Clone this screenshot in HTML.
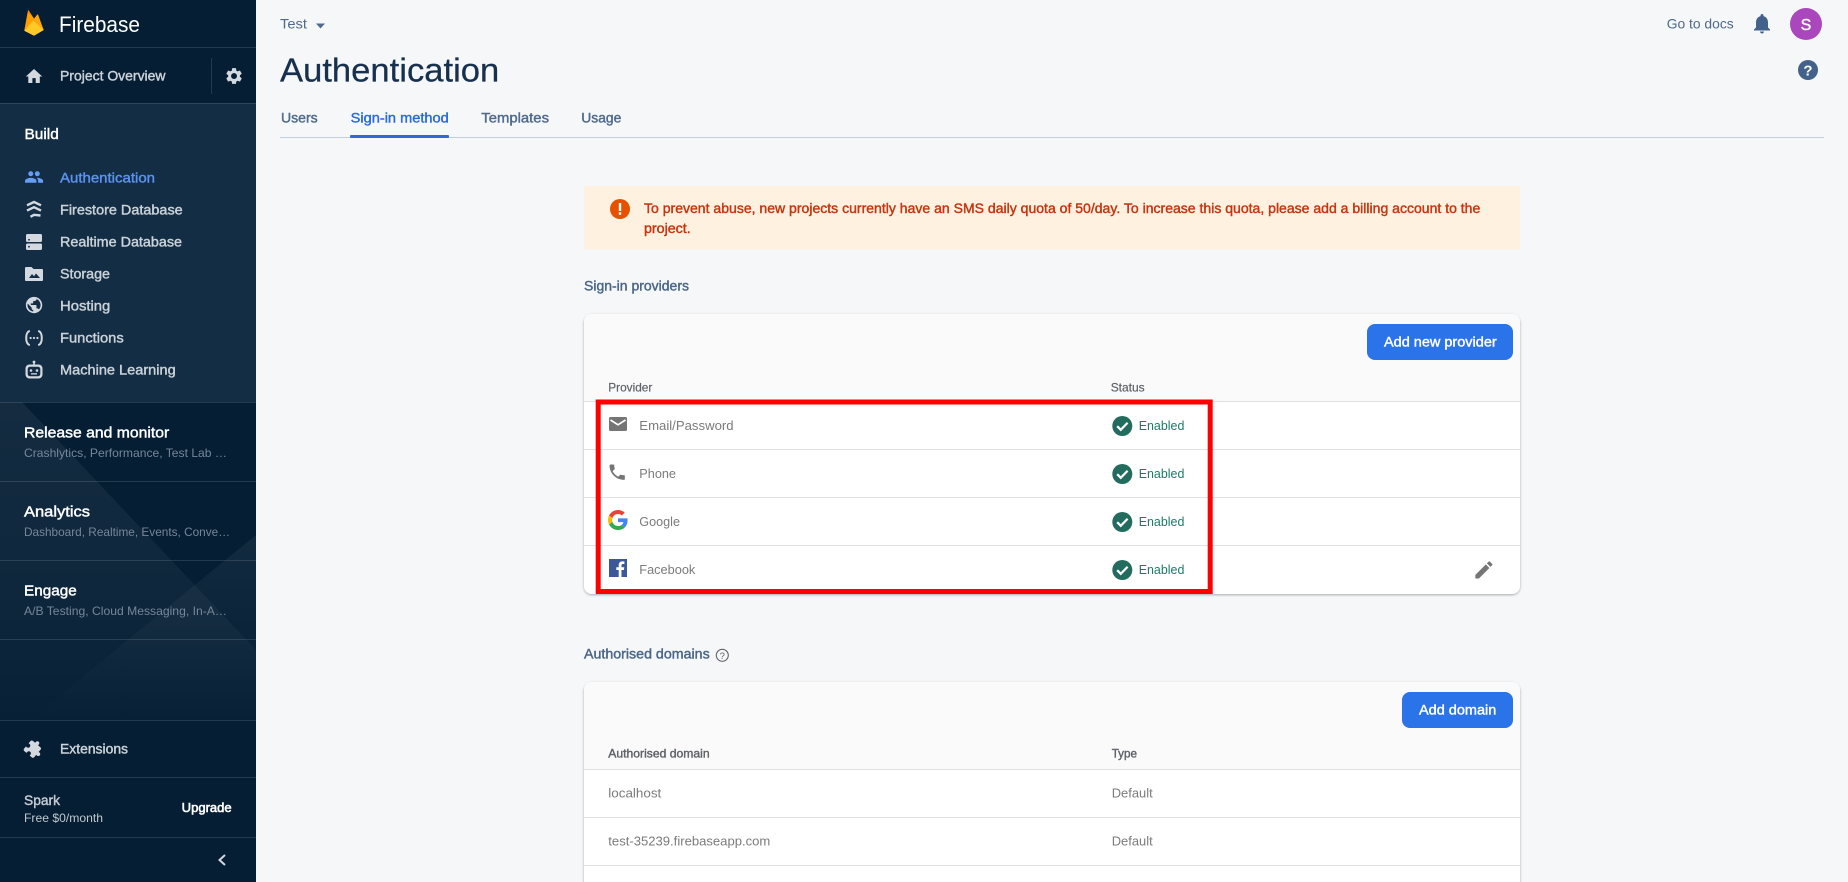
<!DOCTYPE html>
<html lang="en">
<head>
<meta charset="utf-8">
<title>Authentication - Firebase</title>
<style>
html,body{margin:0;padding:0;width:1848px;height:882px;overflow:hidden;background:#f6f7f9}
svg{display:block}
text{font-family:"Liberation Sans",Arial,sans-serif;white-space:pre}
.m{stroke-width:.42px;paint-order:stroke}
.nav{font-size:14px;fill:#cbd2d8;stroke:#cbd2d8}
.ttl{font-size:14.5px;fill:#fff;stroke:#fff}
.sub{font-size:12px;fill:#76869a}
.tab{font-size:14px;fill:#4f6a8a;stroke:#4f6a8a}
.ban{font-size:14px;fill:#c5350f;stroke:#c5350f}
.hd{font-size:14px;fill:#4a6585;stroke:#4a6585}
.th{font-size:12px;fill:#5f6368;stroke:#5f6368}
.td{font-size:13px;fill:#7b7b7b}
.ok{font-size:13px;fill:#1f7a6c}
.btn{font-size:14px;fill:#fff;stroke:#fff}
.ic{fill:#d3d9de}
</style>
</head>
<body>
<svg xmlns="http://www.w3.org/2000/svg" width="1848" height="882" viewBox="0 0 1848 882">
<defs>
<linearGradient id="g1" x1="0" y1="400" x2="0" y2="720" gradientUnits="userSpaceOnUse">
<stop offset="0" stop-color="#fff" stop-opacity=".06"/><stop offset=".6" stop-color="#fff" stop-opacity=".04"/><stop offset="1" stop-color="#fff" stop-opacity=".01"/>
</linearGradient>
<linearGradient id="g2" x1="0" y1="535" x2="0" y2="720" gradientUnits="userSpaceOnUse">
<stop offset="0" stop-color="#fff" stop-opacity=".055"/><stop offset="1" stop-color="#fff" stop-opacity="0"/>
</linearGradient>
<filter id="sh" x="-2%" y="-2%" width="104%" height="106%"><feDropShadow dx="0" dy="1" stdDeviation="1.4" flood-color="#000" flood-opacity=".32"/></filter>
</defs>

<!-- main background -->
<rect width="1848" height="882" fill="#f6f7f9"/>

<!-- sidebar -->
<rect width="256" height="882" fill="#051e34"/>
<rect y="103" width="256" height="299" fill="#132d45"/>
<polygon points="0,402 22,402 256,650 256,720 0,720" fill="url(#g1)"/>
<polygon points="256,535 30,720 256,720" fill="url(#g2)"/>
<g stroke="#fff" stroke-opacity=".12" stroke-width="1">
<line x1="0" y1="47.5" x2="256" y2="47.5"/>
<line x1="0" y1="103.5" x2="256" y2="103.5"/>
<line x1="0" y1="402.5" x2="256" y2="402.5"/>
<line x1="0" y1="481.5" x2="256" y2="481.5"/>
<line x1="0" y1="560.5" x2="256" y2="560.5"/>
<line x1="0" y1="639.5" x2="256" y2="639.5"/>
<line x1="0" y1="720.5" x2="256" y2="720.5"/>
<line x1="0" y1="777.5" x2="256" y2="777.5"/>
<line x1="0" y1="837.5" x2="256" y2="837.5"/>
<line x1="211.5" y1="58" x2="211.5" y2="94"/>
</g>

<!-- logo -->
<path d="M24.3 30.7L37.2 14.6Q37.7 14 38.1 14.7L43.7 30L34 35.6Q33.9 35.7 33.8 35.6Z" fill="#ffa712"/>
<path d="M24.3 30.7L27.9 10.6Q28.2 9.5 28.8 10.5L34.3 19Z" fill="#f57c00"/>
<path d="M24.3 30.7L28 11.5L34.3 19L30 24Z" fill="#ffa000"/>
<path d="M24.3 30.7L43.7 30L34.8 35.3Q34 35.8 33.2 35.3Z M24.3 30.7L33 20.5L43.7 30Z" fill="#ffca28"/>
<text x="59" y="32" font-size="22" fill="#fff" lengthAdjust="spacingAndGlyphs" textLength="81">Firebase</text>

<!-- project overview -->
<g transform="translate(24.2,66.6) scale(.82)" class="ic"><path d="M10 20v-6h4v6h5v-8h3L12 3 2 12h3v8z"/></g>
<text x="60" y="80.5" class="nav m" lengthAdjust="spacingAndGlyphs" textLength="105.5">Project Overview</text>
<g transform="translate(224.2,66.2) scale(.82)" fill="#d3d9de"><path d="M19.14 12.94c.04-.3.06-.61.06-.94 0-.32-.02-.64-.07-.94l2.03-1.58c.18-.14.23-.41.12-.61l-1.92-3.32c-.12-.22-.37-.29-.59-.22l-2.39.96c-.5-.38-1.03-.7-1.62-.94l-.36-2.54c-.04-.24-.24-.41-.48-.41h-3.84c-.24 0-.43.17-.47.41l-.36 2.54c-.59.24-1.13.57-1.62.94l-2.39-.96c-.22-.08-.47 0-.59.22L2.74 8.87c-.12.21-.08.47.12.61l2.03 1.58c-.05.3-.09.63-.09.94s.02.64.07.94l-2.03 1.58c-.18.14-.23.41-.12.61l1.92 3.32c.12.22.37.29.59.22l2.39-.96c.5.38 1.03.7 1.62.94l.36 2.54c.05.24.24.41.48.41h3.84c.24 0 .44-.17.47-.41l.36-2.54c.59-.24 1.13-.56 1.62-.94l2.39.96c.22.08.47 0 .59-.22l1.92-3.32c.12-.22.07-.47-.12-.61l-2.01-1.58zM12 15.6c-1.98 0-3.6-1.62-3.6-3.6s1.62-3.6 3.6-3.6 3.6 1.62 3.6 3.6-1.62 3.6-3.6 3.6z"/></g>

<!-- build -->
<text x="24.5" y="139" class="ttl m" lengthAdjust="spacingAndGlyphs" textLength="34.3">Build</text>

<g transform="translate(24.2,167.2) scale(.82)" fill="#669df6"><path d="M16 11c1.66 0 2.99-1.34 2.99-3S17.66 5 16 5c-1.66 0-3 1.34-3 3s1.34 3 3 3zm-8 0c1.66 0 2.99-1.34 2.99-3S9.66 5 8 5C6.34 5 5 6.34 5 8s1.34 3 3 3zm0 2c-2.33 0-7 1.17-7 3.5V19h14v-2.5c0-2.33-4.67-3.5-7-3.5zm8 0c-.29 0-.62.02-.97.05 1.16.84 1.97 1.97 1.97 3.45V19h6v-2.5c0-2.33-4.67-3.5-7-3.5z"/></g>
<text x="60" y="182.5" class="nav m" style="fill:#5c92f0;stroke:#5c92f0" lengthAdjust="spacingAndGlyphs" textLength="95">Authentication</text>

<g fill="none" stroke="#d3d9de" stroke-width="2.4">
<path d="M27 205.3L34 202L41 205.3"/>
<path d="M27 210.6L34 207.2L41 210.6"/>
<path d="M30.5 216.8L34 214.8L40.5 215.5"/>
</g>
<text x="60" y="214.5" class="nav m" lengthAdjust="spacingAndGlyphs" textLength="122.7">Firestore Database</text>

<rect x="26" y="234" width="16" height="8" rx="1.5" fill="#d3d9de"/>
<rect x="26" y="243.5" width="16" height="6.5" rx="1.5" fill="#d3d9de"/>
<circle cx="29" cy="239.8" r=".9" fill="#132d45"/><circle cx="29" cy="246.7" r=".9" fill="#132d45"/>
<text x="60" y="246.5" class="nav m" lengthAdjust="spacingAndGlyphs" textLength="122">Realtime Database</text>

<path d="M25 268.2Q25 267 26.2 267H31.5L33.5 269H42Q43 269 43 270V280Q43 281 42 281H26Q25 281 25 280Z" fill="#d3d9de"/>
<path d="M29 278L32 274L34 276.2L36 273.5L40 278Z" fill="#132d45"/>
<text x="60" y="278.5" class="nav m" lengthAdjust="spacingAndGlyphs" textLength="50">Storage</text>

<g transform="translate(24.2,295.2) scale(.82)" class="ic"><path d="M12 2C6.48 2 2 6.48 2 12s4.48 10 10 10 10-4.48 10-10S17.52 2 12 2zm-1 17.93c-3.95-.49-7-3.85-7-7.93 0-.62.08-1.21.21-1.79L9 15v1c0 1.1.9 2 2 2v1.93zm6.9-2.54c-.26-.81-1-1.39-1.9-1.39h-1v-3c0-.55-.45-1-1-1H8v-2h2c.55 0 1-.45 1-1V7h2c1.1 0 2-.9 2-2v-.41c2.93 1.19 5 4.06 5 7.41 0 2.08-.8 3.97-2.1 5.39z"/></g>
<text x="60" y="310.5" class="nav m" lengthAdjust="spacingAndGlyphs" textLength="50.3">Hosting</text>

<g fill="none" stroke="#d3d9de" stroke-width="2">
<path d="M29.8 330.8Q26.2 332 26.2 338Q26.2 344 29.8 345.2"/>
<path d="M38.2 330.8Q41.8 332 41.8 338Q41.8 344 38.2 345.2"/>
</g>
<circle cx="30.6" cy="338" r="1.1" fill="#d3d9de"/><circle cx="34" cy="338" r="1.1" fill="#d3d9de"/><circle cx="37.4" cy="338" r="1.1" fill="#d3d9de"/>
<text x="60" y="342.5" class="nav m" lengthAdjust="spacingAndGlyphs" textLength="63.7">Functions</text>

<circle cx="34" cy="362" r="1.4" fill="#d3d9de"/>
<rect x="33.2" y="362" width="1.6" height="3" fill="#d3d9de"/>
<rect x="25.5" y="364.5" width="17" height="14" rx="4" fill="#d3d9de"/>
<rect x="27.7" y="366.7" width="12.6" height="9.6" rx="2.5" fill="#132d45"/>
<circle cx="31" cy="370.5" r="1.3" fill="#d3d9de"/><circle cx="37" cy="370.5" r="1.3" fill="#d3d9de"/>
<rect x="31" y="373.2" width="6" height="1.3" fill="#d3d9de"/>
<text x="60" y="374.5" class="nav m" lengthAdjust="spacingAndGlyphs" textLength="115.7">Machine Learning</text>

<!-- collapsed sections -->
<text x="24" y="437.5" class="ttl m" lengthAdjust="spacingAndGlyphs" textLength="145.3">Release and monitor</text>
<text x="24" y="457" class="sub" lengthAdjust="spacingAndGlyphs" textLength="203">Crashlytics, Performance, Test Lab …</text>
<text x="24" y="516.5" class="ttl m" lengthAdjust="spacingAndGlyphs" textLength="66">Analytics</text>
<text x="24" y="536" class="sub" lengthAdjust="spacingAndGlyphs" textLength="206">Dashboard, Realtime, Events, Conve…</text>
<text x="24" y="595.5" class="ttl m" lengthAdjust="spacingAndGlyphs" textLength="52.7">Engage</text>
<text x="24" y="615" class="sub" lengthAdjust="spacingAndGlyphs" textLength="203">A/B Testing, Cloud Messaging, In-A…</text>

<!-- extensions -->
<g transform="translate(34,749) rotate(40) scale(.78) translate(-12,-12)" class="ic"><path d="M20.5 11H19V7c0-1.1-.9-2-2-2h-4V3.5C13 2.12 11.88 1 10.5 1S8 2.12 8 3.5V5H4c-1.1 0-1.99.9-1.99 2v3.8H3.5c1.49 0 2.7 1.21 2.7 2.7s-1.21 2.7-2.7 2.7H2V20c0 1.1.9 2 2 2h3.8v-1.5c0-1.49 1.21-2.7 2.7-2.7 1.49 0 2.7 1.21 2.7 2.7V22H17c1.1 0 2-.9 2-2v-4h1.5c1.38 0 2.5-1.12 2.5-2.5S21.88 11 20.5 11z"/></g>
<text x="60" y="753.5" class="nav m" lengthAdjust="spacingAndGlyphs" textLength="68">Extensions</text>

<!-- plan -->
<text x="24" y="805" font-size="14" fill="#c5ccd3" stroke="#c5ccd3" class="m" lengthAdjust="spacingAndGlyphs" textLength="36">Spark</text>
<text x="24" y="822" font-size="12" fill="#c0c7ce" lengthAdjust="spacingAndGlyphs" textLength="79">Free $0/month</text>
<text x="181.7" y="812" font-size="13" fill="#fff" stroke="#fff" class="m" style="stroke-width:.6px" lengthAdjust="spacingAndGlyphs" textLength="50">Upgrade</text>
<path d="M225 855L219.5 860L225 865" fill="none" stroke="#d3d9de" stroke-width="2"/>

<!-- top bar -->
<text x="280" y="28.5" class="tab" style="stroke:none" lengthAdjust="spacingAndGlyphs" textLength="27">Test</text>
<polygon points="316,23.5 325,23.5 320.5,28.5" fill="#4f6a8a"/>
<text x="1666.7" y="28.5" class="tab" style="stroke:none" lengthAdjust="spacingAndGlyphs" textLength="67">Go to docs</text>
<g transform="translate(1750,11.5)" fill="#43628a"><path d="M12 22c1.1 0 2-.9 2-2h-4c0 1.1.9 2 2 2zm6-6v-5c0-3.07-1.63-5.64-4.5-6.32V4c0-.83-.67-1.5-1.5-1.5s-1.5.67-1.5 1.5v.68C7.64 5.36 6 7.92 6 11v5l-2 2v1h16v-1l-2-2z"/></g>
<circle cx="1806" cy="24" r="16" fill="#ab47bc"/>
<text x="1806" y="30" font-size="16" fill="#fff" stroke="#fff" class="m" text-anchor="middle">S</text>

<circle cx="1808" cy="70" r="10" fill="#43628a"/>
<text x="1808" y="75.5" font-size="15" font-weight="700" fill="#fff" text-anchor="middle">?</text>

<text x="280" y="81.7" font-size="33" fill="#17304d" stroke="#17304d" class="m" style="stroke-width:.25px" lengthAdjust="spacingAndGlyphs" textLength="219.3">Authentication</text>

<!-- tabs -->
<text x="281" y="122.5" class="tab m" lengthAdjust="spacingAndGlyphs" textLength="36.7">Users</text>
<text x="350.7" y="122.5" class="tab m" style="fill:#2a6ae0;stroke:#2a6ae0" lengthAdjust="spacingAndGlyphs" textLength="98">Sign-in method</text>
<text x="481.3" y="122.5" class="tab m" lengthAdjust="spacingAndGlyphs" textLength="67.7">Templates</text>
<text x="581.3" y="122.5" class="tab m" lengthAdjust="spacingAndGlyphs" textLength="40">Usage</text>
<rect x="280" y="137" width="1544" height="1" fill="#c3d0e0"/>
<rect x="350" y="135" width="99" height="3" rx="1" fill="#2a6bd8"/>

<!-- banner -->
<rect x="584" y="186" width="936" height="63.5" fill="#fef1e0"/>
<circle cx="620" cy="209" r="10" fill="#e65100"/>
<rect x="618.8" y="203" width="2.4" height="8" fill="#fff"/>
<rect x="618.8" y="212.3" width="2.4" height="2.4" fill="#fff"/>
<text x="644" y="213" class="ban m" lengthAdjust="spacingAndGlyphs" textLength="836.3">To prevent abuse, new projects currently have an SMS daily quota of 50/day. To increase this quota, please add a billing account to the</text>
<text x="644" y="233" class="ban m" lengthAdjust="spacingAndGlyphs" textLength="46.7">project.</text>

<!-- providers -->
<text x="584" y="290.5" class="hd m" lengthAdjust="spacingAndGlyphs" textLength="105">Sign-in providers</text>

<rect x="584" y="314" width="936" height="280" rx="8" fill="#fff" filter="url(#sh)"/>
<path d="M584 401V322Q584 314 592 314H1512Q1520 314 1520 322V401Z" fill="#fafafa"/>
<g fill="#e0e0e0">
<rect x="584" y="401" width="936" height="1"/>
<rect x="584" y="449" width="936" height="1"/>
<rect x="584" y="497" width="936" height="1"/>
<rect x="584" y="545" width="936" height="1"/>
</g>

<rect x="1367" y="324" width="146" height="36" rx="8" fill="#2a73e8"/>
<text x="1384" y="346.5" class="btn m" lengthAdjust="spacingAndGlyphs" textLength="112.7">Add new provider</text>

<text x="608.3" y="391.5" class="th m" style="stroke-width:.2px" lengthAdjust="spacingAndGlyphs" textLength="44">Provider</text>
<text x="1110.7" y="391.5" class="th m" style="stroke-width:.2px" lengthAdjust="spacingAndGlyphs" textLength="34">Status</text>

<!-- email -->
<rect x="609" y="417" width="18" height="14" rx="1.5" fill="#757575"/>
<path d="M610.5 420L618 424.8L625.5 420" fill="none" stroke="#fff" stroke-width="1.7"/>
<text x="639.3" y="430.2" class="td" lengthAdjust="spacingAndGlyphs" textLength="94.3">Email/Password</text>
<!-- phone -->
<g transform="translate(607,462) scale(.85)" fill="#757575"><path d="M6.62 10.79c1.44 2.83 3.76 5.14 6.59 6.59l2.2-2.2c.27-.27.67-.36 1.02-.24 1.12.37 2.33.57 3.57.57.55 0 1 .45 1 1V20c0 .55-.45 1-1 1-9.39 0-17-7.61-17-17 0-.55.45-1 1-1h3.5c.55 0 1 .45 1 1 0 1.25.2 2.45.57 3.57.11.35.03.74-.25 1.02l-2.2 2.2z"/></g>
<text x="639.3" y="478.2" class="td" lengthAdjust="spacingAndGlyphs" textLength="36.7">Phone</text>
<!-- google -->
<g transform="translate(608,510) scale(.4167)">
<path fill="#EA4335" d="M24 9.5c3.54 0 6.71 1.22 9.21 3.6l6.85-6.85C35.9 2.38 30.47 0 24 0 14.62 0 6.51 5.38 2.56 13.22l7.98 6.19C12.43 13.72 17.74 9.5 24 9.5z"/>
<path fill="#4285F4" d="M46.98 24.55c0-1.57-.15-3.09-.38-4.55H24v9.02h12.94c-.58 2.96-2.26 5.48-4.78 7.18l7.73 6c4.51-4.18 7.09-10.36 7.09-17.65z"/>
<path fill="#FBBC05" d="M10.53 28.59c-.48-1.45-.76-2.99-.76-4.59s.27-3.14.76-4.59l-7.98-6.19C.92 16.46 0 20.12 0 24c0 3.88.92 7.54 2.56 10.78l7.97-6.19z"/>
<path fill="#34A853" d="M24 48c6.48 0 11.93-2.13 15.89-5.81l-7.73-6c-2.15 1.45-4.92 2.3-8.16 2.3-6.26 0-11.57-4.22-13.47-9.91l-7.98 6.19C6.51 42.62 14.62 48 24 48z"/>
</g>
<text x="639.3" y="526.2" class="td" lengthAdjust="spacingAndGlyphs" textLength="40.7">Google</text>
<!-- facebook -->
<rect x="609" y="559" width="18" height="18" fill="#3b5998"/>
<path d="M621.5 577v-7h2.4l.4-2.8h-2.8v-1.8c0-.8.2-1.4 1.4-1.4h1.5v-2.5c-.3 0-1.1-.1-2.1-.1-2.1 0-3.6 1.3-3.6 3.7v2.1h-2.4v2.8h2.4v7z" fill="#fff"/>
<text x="639.3" y="574.2" class="td" lengthAdjust="spacingAndGlyphs" textLength="56">Facebook</text>

<!-- statuses -->
<g>
<circle cx="1122.3" cy="426" r="10" fill="#246b5f"/>
<path d="M1117.2 426.2L1120.8 429.8L1127.6 422.7" fill="none" stroke="#fff" stroke-width="2.2"/>
<text x="1138.7" y="430" class="ok" lengthAdjust="spacingAndGlyphs" textLength="45.7">Enabled</text>
</g>
<g transform="translate(0,48)">
<circle cx="1122.3" cy="426" r="10" fill="#246b5f"/>
<path d="M1117.2 426.2L1120.8 429.8L1127.6 422.7" fill="none" stroke="#fff" stroke-width="2.2"/>
<text x="1138.7" y="430" class="ok" lengthAdjust="spacingAndGlyphs" textLength="45.7">Enabled</text>
</g>
<g transform="translate(0,96)">
<circle cx="1122.3" cy="426" r="10" fill="#246b5f"/>
<path d="M1117.2 426.2L1120.8 429.8L1127.6 422.7" fill="none" stroke="#fff" stroke-width="2.2"/>
<text x="1138.7" y="430" class="ok" lengthAdjust="spacingAndGlyphs" textLength="45.7">Enabled</text>
</g>
<g transform="translate(0,144)">
<circle cx="1122.3" cy="426" r="10" fill="#246b5f"/>
<path d="M1117.2 426.2L1120.8 429.8L1127.6 422.7" fill="none" stroke="#fff" stroke-width="2.2"/>
<text x="1138.7" y="430" class="ok" lengthAdjust="spacingAndGlyphs" textLength="45.7">Enabled</text>
</g>

<!-- pencil -->
<g transform="translate(1472.5,558.5) scale(.95)" fill="#757575"><path d="M3 17.25V21h3.75L17.81 9.94l-3.75-3.75L3 17.25zM20.71 7.04c.39-.39.39-1.02 0-1.41l-2.34-2.34c-.39-.39-1.02-.39-1.41 0l-1.83 1.83 3.75 3.75 1.83-1.83z"/></g>

<!-- red highlight -->
<rect x="598.2" y="402" width="612" height="189.5" fill="none" stroke="#ff0000" stroke-width="5"/>

<!-- authorised domains -->
<text x="584" y="658.5" class="hd m" lengthAdjust="spacingAndGlyphs" textLength="125.7">Authorised domains</text>
<circle cx="722.3" cy="655.3" r="6" fill="none" stroke="#5f6368" stroke-width="1.1"/>
<text x="722.3" y="659" font-size="9.5" fill="#5f6368" text-anchor="middle">?</text>

<rect x="584" y="682" width="936" height="240" rx="8" fill="#fff" filter="url(#sh)"/>
<path d="M584 769V690Q584 682 592 682H1512Q1520 682 1520 690V769Z" fill="#fafafa"/>
<g fill="#e0e0e0">
<rect x="584" y="769" width="936" height="1"/>
<rect x="584" y="817" width="936" height="1"/>
<rect x="584" y="865" width="936" height="1"/>
</g>
<rect x="1402" y="692" width="111" height="36" rx="8" fill="#2a73e8"/>
<text x="1419" y="714.5" class="btn m" lengthAdjust="spacingAndGlyphs" textLength="77.3">Add domain</text>
<text x="608.3" y="757.5" class="th m" lengthAdjust="spacingAndGlyphs" textLength="101.3">Authorised domain</text>
<text x="1111.7" y="757.5" class="th m" lengthAdjust="spacingAndGlyphs" textLength="25.3">Type</text>
<text x="608.3" y="797.7" class="td" lengthAdjust="spacingAndGlyphs" textLength="53">localhost</text>
<text x="1111.7" y="797.7" class="td" lengthAdjust="spacingAndGlyphs" textLength="41">Default</text>
<text x="608.3" y="845.7" class="td" lengthAdjust="spacingAndGlyphs" textLength="162">test-35239.firebaseapp.com</text>
<text x="1111.7" y="845.7" class="td" lengthAdjust="spacingAndGlyphs" textLength="41">Default</text>
</svg>
</body>
</html>
